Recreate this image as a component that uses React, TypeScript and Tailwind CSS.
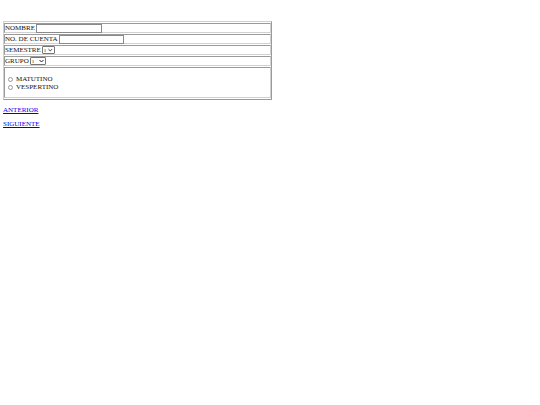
import React from "react";

function Chevron() {
  return (
    <svg width="5" height="4" viewBox="0 0 10 8" className="ml-[2px]">
      <path d="M1 2 L5 6 L9 2" fill="none" stroke="#222" strokeWidth="2" />
    </svg>
  );
}

function Sel({ w }: { w: string }) {
  return (
    <span className={`inline-flex items-center ${w} h-[8px] border border-[#767676] rounded-[1px] bg-white px-[1px] text-[5px] leading-none`}>
      <span>1</span>
      <span className="flex-1" />
      <Chevron />
    </span>
  );
}

function Radio() {
  return <span className="inline-block w-[5px] h-[5px] rounded-full border border-[#9a9a9a] bg-white mr-[3px]" />;
}

const row =
  "border border-t-[#9a9a9a] border-l-[#9a9a9a] border-b-[#d0d0d0] border-r-[#d0d0d0] flex items-center";

export default function App() {
  return (
    <div className="w-[540px] h-[405px] bg-white text-[#111] text-[7px] leading-[9px]" style={{ fontFamily: '"Liberation Serif", "Times New Roman", serif' }}>
      <div className="pt-[21px] pl-[3px]">
        <div className="w-[269px] border border-t-[#d0d0d0] border-l-[#d0d0d0] border-b-[#9a9a9a] border-r-[#9a9a9a] py-[1px] flex flex-col gap-[1px]">
          <div className={`h-[10px] ${row}`}>
            <span>NOMBRE</span>
            <span className="inline-block ml-[1px] w-[66px] h-[9px] border border-[#8a8a8a] bg-white" />
          </div>
          <div className={`h-[10px] ${row}`}>
            <span>NO. DE CUENTA</span>
            <span className="inline-block ml-[1px] w-[65px] h-[9px] border border-[#8a8a8a] bg-white" />
          </div>
          <div className={`h-[10px] ${row} gap-[1px]`}>
            <span>SEMESTRE</span>
            <Sel w="w-[13px]" />
          </div>
          <div className={`h-[10px] ${row} gap-[1px]`}>
            <span>GRUPO</span>
            <Sel w="w-[16px]" />
          </div>
          <div className="h-[31px] border border-t-[#9a9a9a] border-l-[#9a9a9a] border-b-[#d0d0d0] border-r-[#d0d0d0] flex flex-col pl-[3px] pt-[7px]">
            <div className="flex items-center h-[8px]"><Radio />MATUTINO</div>
            <div className="flex items-center h-[8px]"><Radio />VESPERTINO</div>
          </div>
        </div>
        <div className="mt-[6px] flex flex-col gap-[5px]">
          <a href="#" className="text-[#0000ee] underline h-[9px]">ANTERIOR</a>
          <a href="#" className="text-[#0000ee] underline h-[9px]">SIGUIENTE</a>
        </div>
      </div>
    </div>
  );
}
